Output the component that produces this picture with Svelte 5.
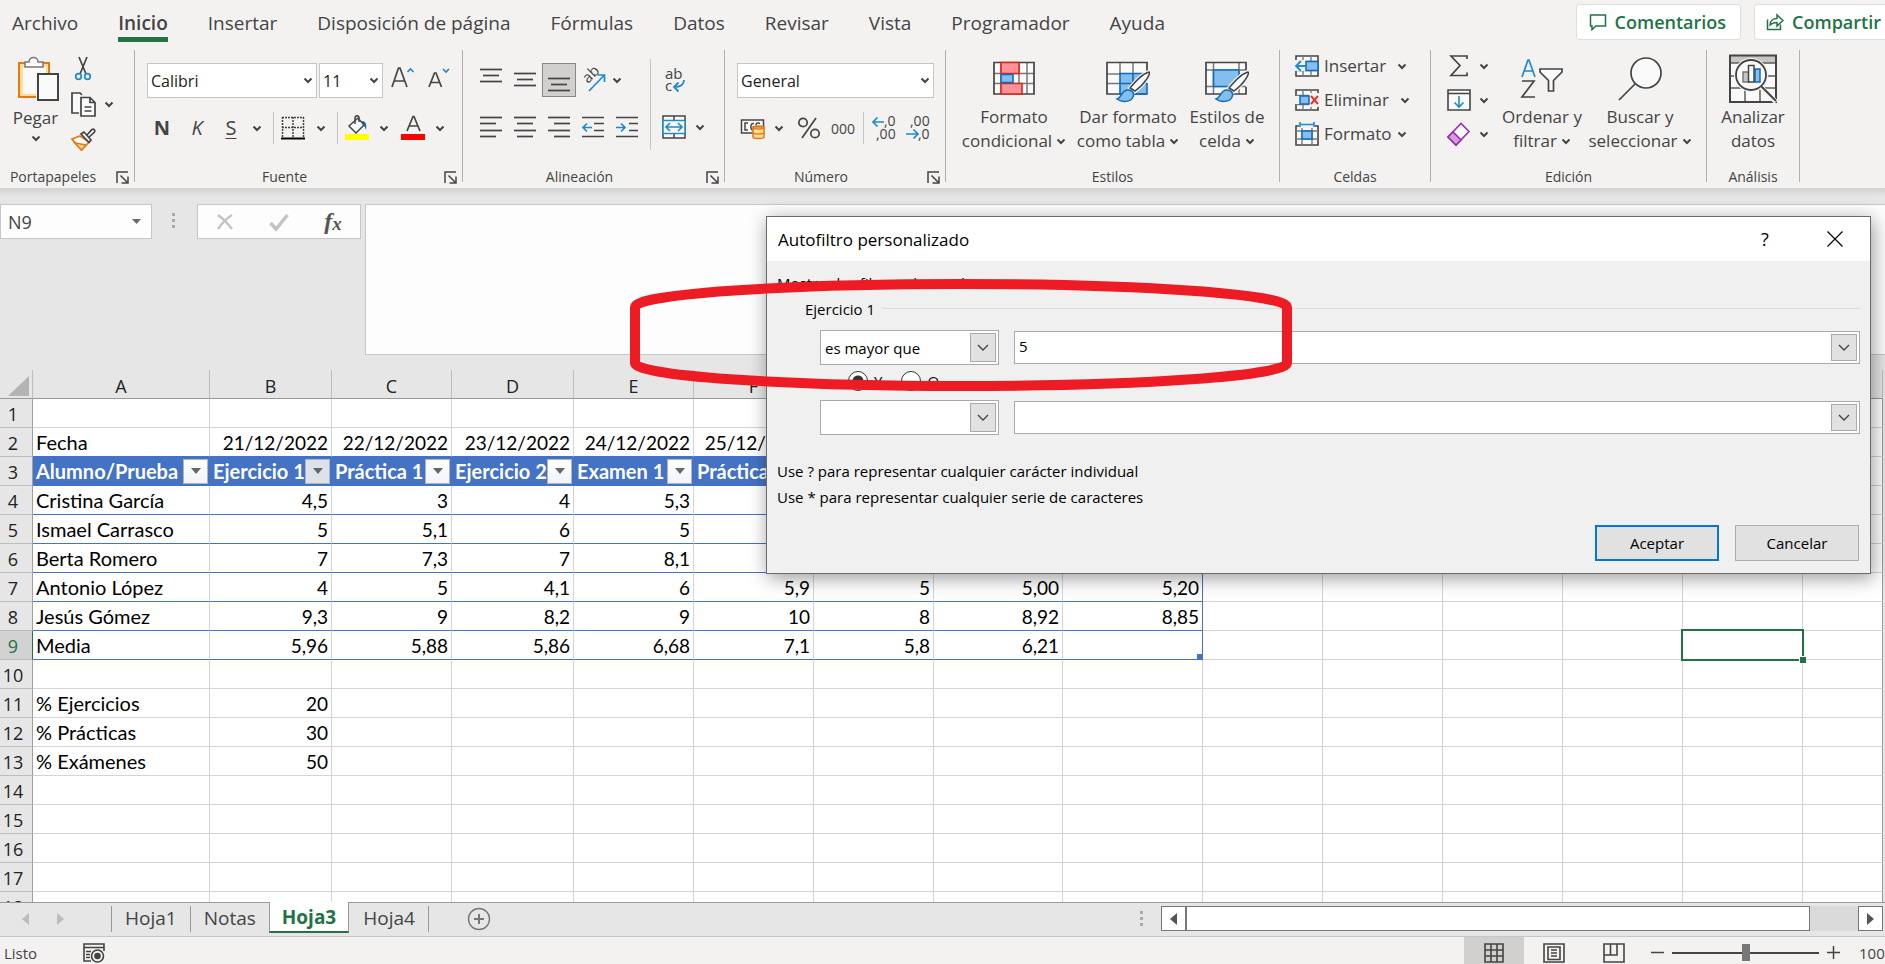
<script>
	const tabs = [
		'Archivo',
		'Inicio',
		'Insertar',
		'Disposición de página',
		'Fórmulas',
		'Datos',
		'Revisar',
		'Vista',
		'Programador',
		'Ayuda'
	];
	let activeTab = 'Inicio';

	const columns = [
		{ name: 'A', width: 177 },
		{ name: 'B', width: 122 },
		{ name: 'C', width: 120 },
		{ name: 'D', width: 122 },
		{ name: 'E', width: 120 },
		{ name: 'F', width: 120 },
		{ name: 'G', width: 120 },
		{ name: 'H', width: 129 },
		{ name: 'I', width: 140 },
		{ name: 'J', width: 120 },
		{ name: 'K', width: 120 },
		{ name: 'L', width: 120 },
		{ name: 'M', width: 120 },
		{ name: 'N', width: 120 },
		{ name: 'O', width: 0 }
	];

	/**@type {Record<number,string[]>}*/
	const cells = {
		2: ['Fecha', '21/12/2022', '22/12/2022', '23/12/2022', '24/12/2022', '25/12/2022'],
		3: ['Alumno/Prueba', 'Ejercicio 1', 'Práctica 1', 'Ejercicio 2', 'Examen 1', 'Práctica 2'],
		4: ['Cristina García', '4,5', '3', '4', '5,3'],
		5: ['Ismael Carrasco', '5', '5,1', '6', '5'],
		6: ['Berta Romero', '7', '7,3', '7', '8,1'],
		7: ['Antonio López', '4', '5', '4,1', '6', '5,9', '5', '5,00', '5,20'],
		8: ['Jesús Gómez', '9,3', '9', '8,2', '9', '10', '8', '8,92', '8,85'],
		9: ['Media', '5,96', '5,88', '5,86', '6,68', '7,1', '5,8', '6,21'],
		11: ['% Ejercicios', '20'],
		12: ['% Prácticas', '30'],
		13: ['% Exámenes', '50']
	};
	const rows = Array.from({ length: 18 }, (_, i) => i + 1);
	const sheets = ['Hoja1', 'Notas', 'Hoja3', 'Hoja4'];
	let activeSheet = 'Hoja3';

	/**@type {(row:number,col:number)=>boolean}*/
	const inTable = (row, col) => row >= 3 && row <= 9 && col <= 8;
</script>

{#snippet chevron()}
	<svg class="chevron" width="10" height="7" viewBox="0 0 10 7"><path d="M1.500 1.500L5 5l3.500-3.500" /></svg>
{/snippet}

{#snippet drop(label)}
	<button class="tool" aria-label={label}>{@render chevron()}</button>
{/snippet}

{#snippet lines(set)}
	<svg width="22" height="22" viewBox="0 0 22 22" class="ink">
		{#each set as [x1, x2, y]}
			<path d="M{x1} {y}.5H{x2}" />
		{/each}
	</svg>
{/snippet}

{#snippet footer(text, launcher)}
	<footer>
		<span>{text}</span>
		{#if launcher}
			<button class="launcher" aria-label="Más opciones de {text}">
				<svg width="13" height="13" viewBox="0 0 13 13">
					<path d="M1 12V1h11M4.500 4.500l6.500 6.500M12 5.500V12H5.500" />
				</svg>
			</button>
		{/if}
	</footer>
{/snippet}

<div class="excel">
	<nav class="tabs">
		{#each tabs as tab}
			<button class="tab" class:active={tab === activeTab} on:click={() => (activeTab = tab)}>{tab}</button>
		{/each}
		<button class="share first">
			<svg width="18" height="17" viewBox="0 0 18 17"><path d="M1.500 1h15v11H7l-4 3.500V12H1.500z" /></svg>
			Comentarios
		</button>
		<button class="share last">
			<svg width="18" height="18" viewBox="0 0 18 18">
				<path d="M1.500 6.500v10h13v-5M4 12c0-4 3-6.500 7-6.500V2l6 5.500-6 5.500V9.500c-3 0-5 .5-7 2.500z" />
			</svg>
			Compartir
		</button>
	</nav>

	<div class="ribbon">
		<section class="group clipboard">
			<div class="body">
				<button class="paste">
					<svg width="46" height="46" viewBox="-4 0 46 46">
						<path d="M2 7h30v34H2z" fill="#fbdd94" stroke="#e07b1a" stroke-width="2" />
						<path d="M6 11h23v27H6z" fill="#fafafa" />
						<path d="M8 11V6h4c0-6 9-6 9 0h5v5z" fill="#fafafa" stroke="#7a7876" stroke-width="1.500" />
						<path d="M19 16h4v28h-4z" fill="#f3f2f1" />
						<path d="M21 18h20v26H21z" fill="#fafafa" stroke="#444" stroke-width="2" />
					</svg>
					<span>Pegar</span>
					{@render chevron()}
				</button>
				<div class="clip-tools">
					<button class="tool" aria-label="Cortar">
						<svg width="18" height="25" viewBox="0 0 18 25" fill="none">
							<path d="M5 1l7 17M13 1L6 18" stroke="#444" stroke-width="1.700" />
							<circle cx="4.500" cy="20.500" r="2.800" stroke="#1e8bcd" stroke-width="1.700" />
							<circle cx="13.500" cy="20.500" r="2.800" stroke="#1e8bcd" stroke-width="1.700" />
						</svg>
					</button>
					<button class="tool" aria-label="Copiar">
						<svg width="25" height="25" viewBox="0 0 25 25" fill="#fafafa" stroke="#444" stroke-width="1.700">
							<path d="M8 21H1V1h8l2 2" />
							<path d="M10 5.500h9l5 5V24H10z" />
							<path d="M19 5.500v5h5M13.500 15h7M13.500 19h7" fill="none" />
						</svg>
					</button>
					{@render drop('Opciones de copia')}
					<button class="tool" aria-label="Copiar formato">
						<svg width="25" height="24" viewBox="0 0 25 24" stroke-width="1.700">
							<path d="M1 11l8-3 9 6-7.500 8z" fill="#fafafa" stroke="#e07b1a" />
							<path d="M4 15l11 2-4.500 5z" fill="#fbdd94" stroke="#e07b1a" />
							<path d="M15 8l6-6.500c2-1 3.500 1 2.500 2.500L17 10" fill="#fafafa" stroke="#444" />
							<path d="M10 6l3-2 7 8-2 2.500z" fill="#fafafa" stroke="#444" />
						</svg>
					</button>
				</div>
			</div>
			{@render footer('Portapapeles', true)}
		</section>

		<section class="group font">
			<div class="body stacked">
				<div class="font-pick">
					<label class="pick">
						<select aria-label="Fuente"><option>Calibri</option></select>
						{@render chevron()}
					</label>
					<label class="pick">
						<select aria-label="Tamaño de fuente"><option>11</option></select>
						{@render chevron()}
					</label>
					<button class="tool" aria-label="Aumentar tamaño de fuente">
						<svg width="24" height="26" viewBox="0 0 24 26" class="ink">
							<path d="M0 19L6.500 0h1.500l7 19M2.500 13h9.500" />
							<path d="M15.500 4L18.500 1l3 3" class="blue" />
						</svg>
					</button>
					<button class="tool" aria-label="Disminuir tamaño de fuente">
						<svg width="24" height="26" viewBox="0 0 24 26" class="ink">
							<path d="M0 19L5.500 5h1.500l5.500 14M2.500 14.500h7.500" />
							<path d="M14 1l3 3 3-3" class="blue" />
						</svg>
					</button>
				</div>
				<div class="font-style">
					<button class="tool letter bold">N</button>
					<button class="tool letter italic">K</button>
					<button class="tool letter under">S</button>
					{@render drop('Opciones de subrayado')}
					<i class="rule"></i>
					<button class="tool" aria-label="Bordes">
						<svg width="24" height="24" viewBox="0 0 24 24" fill="none" stroke="#444" stroke-width="1.500">
							<path d="M1 1.500h22M1 11.500h22M1.500 1v20M12 1v20M22.500 1v20" stroke-dasharray="2 1" />
							<path d="M0 22.500h24" stroke="#000" stroke-width="2" />
						</svg>
					</button>
					{@render drop('Opciones de bordes')}
					<i class="rule"></i>
					<button class="tool" aria-label="Color de relleno">
						<svg width="24" height="26" viewBox="0 0 24 26">
							<path d="M4 11l9-8 6 7-8 8z" fill="#fafafa" stroke="#444" stroke-width="1.500" />
							<path d="M10 9V3c0-3 4-3 4 0v4" fill="none" stroke="#444" stroke-width="1.500" />
							<path d="M17 6c4 0 5 4 4 9-1-4-3-5-3-5z" fill="#1265a8" />
							<path d="M0 19h24v6H0z" fill="#ff0" />
						</svg>
					</button>
					{@render drop('Más colores de relleno')}
					<button class="tool" aria-label="Color de fuente">
						<svg width="24" height="26" viewBox="0 0 24 26">
							<path d="M6 16L12 1.500h1L19 16M8.500 11h8" fill="none" stroke="#444" stroke-width="1.700" />
							<path d="M0 19h24v6H0z" fill="#f00" />
						</svg>
					</button>
					{@render drop('Más colores de fuente')}
				</div>
			</div>
			{@render footer('Fuente', true)}
		</section>

		<section class="group align">
			<div class="body">
				<div class="align-grid">
					<button class="tool" aria-label="Alinear en la parte superior">{@render lines([[0, 22, 0], [3, 19, 6], [0, 22, 12]])}</button>
					<button class="tool" aria-label="Alinear en el medio">{@render lines([[0, 22, 4], [3, 19, 10], [0, 22, 16]])}</button>
					<button class="tool pressed" aria-label="Alinear en la parte inferior">{@render lines([[0, 22, 9], [3, 19, 15], [0, 22, 21]])}</button>
					<button class="tool" aria-label="Orientación">
						<svg width="26" height="26" viewBox="0 0 26 26">
							<text transform="translate(8 17) rotate(-45)" font-size="15" fill="#444">ab</text>
							<path d="M9 24L24 8.500M17.500 8h7v7" fill="none" stroke="#1e8bcd" stroke-width="1.700" />
						</svg>
					</button>
					<button class="tool start" aria-label="Opciones de orientación">{@render chevron()}</button>
					<button class="tool" aria-label="Alinear a la izquierda">{@render lines([[0, 22, 1], [0, 16, 7], [0, 22, 14], [0, 16, 20]])}</button>
					<button class="tool" aria-label="Centrar">{@render lines([[0, 22, 1], [3, 19, 7], [0, 22, 14], [3, 19, 20]])}</button>
					<button class="tool" aria-label="Alinear a la derecha">{@render lines([[0, 22, 1], [6, 22, 7], [0, 22, 14], [6, 22, 20]])}</button>
					<button class="tool" aria-label="Disminuir sangría">
						<svg width="22" height="22" viewBox="0 0 22 22" class="ink">
							<path d="M0 1.500h22M12 7.500h10M12 14.500h10M0 20.500h22" />
							<path d="M10 11.500H1M5 7.500l-4 4 4 4" class="blue" />
						</svg>
					</button>
					<button class="tool" aria-label="Aumentar sangría">
						<svg width="22" height="22" viewBox="0 0 22 22" class="ink">
							<path d="M0 1.500h22M13 7.500h9M13 14.500h9M0 20.500h22" />
							<path d="M0 11.500h9M5 7.500l4 4-4 4" class="blue" />
						</svg>
					</button>
				</div>
				<i class="rule tall"></i>
				<div class="wrap-grid">
					<button class="tool" aria-label="Ajustar texto">
						<svg width="22" height="26" viewBox="0 0 22 26">
							<text x="2" y="12" font-size="15" fill="#444">ab</text>
							<text x="2" y="24" font-size="15" fill="#444">c</text>
							<path d="M21 13c0 5-3 7-10 7M15.500 15.500L11 20l4.500 4.500" fill="none" stroke="#1e8bcd" stroke-width="1.800" />
						</svg>
					</button>
					<i></i>
					<button class="tool" aria-label="Combinar y centrar">
						<svg width="24" height="24" viewBox="0 0 24 24" fill="#fafafa" stroke="#444" stroke-width="1.500">
							<path d="M1 1h22v22H1zM12 1v22" />
							<path d="M1 5.500h22v13H1z" stroke="#1e8bcd" />
							<path d="M4 12h16M8 8l-4 4 4 4M16 8l4 4-4 4" fill="none" stroke="#1e8bcd" stroke-width="1.700" />
						</svg>
					</button>
					{@render drop('Opciones de combinar')}
				</div>
			</div>
			{@render footer('Alineación', true)}
		</section>

		<section class="group number">
			<div class="body stacked">
				<label class="pick">
					<select aria-label="Formato de número"><option>General</option></select>
					{@render chevron()}
				</label>
				<div class="number-tools">
					<button class="tool" aria-label="Formato de contabilidad">
						<svg width="26" height="22" viewBox="0 0 26 22" fill="none" stroke="#444" stroke-width="1.500">
							<path d="M1.500 3h22v13h-22z" fill="#fafafa" />
							<path d="M8 6H5v7h3M14 6.500c-4-1-4 6.500-1 6.500M20 6.500c-3-1.500-4 0-4 2" />
							<path d="M13 10h11v10c0 2-11 2-11 0z" fill="#fbdd94" stroke="#e07b1a" />
							<path d="M13 10.500c0 2 11 2 11 0s-11-2-11 0M13 15.500c0 2 11 2 11 0" stroke="#e07b1a" />
						</svg>
					</button>
					{@render drop('Formatos de contabilidad')}
					<button class="tool" aria-label="Estilo porcentual">
						<svg width="24" height="24" viewBox="0 0 24 24" class="ink">
							<circle cx="6" cy="6.500" r="4.200" /><circle cx="18" cy="17.500" r="4.200" /><path d="M19 2L5 22" />
						</svg>
					</button>
					<button class="tool thousands">000</button>
					<i class="rule"></i>
					<button class="tool" aria-label="Aumentar decimales">
						<svg width="24" height="26" viewBox="0 0 24 26">
							<text x="12" y="11" font-size="14" fill="#444">,0</text>
							<text x="4" y="24" font-size="14" fill="#444">,00</text>
							<path d="M12 7H1M5.500 2.500L1 7l4.500 4.500" fill="none" stroke="#1e8bcd" stroke-width="1.700" />
						</svg>
					</button>
					<button class="tool" aria-label="Disminuir decimales">
						<svg width="24" height="26" viewBox="0 0 24 26">
							<text x="4" y="11" font-size="14" fill="#444">,00</text>
							<text x="12" y="24" font-size="14" fill="#444">,0</text>
							<path d="M0 19h12M7.500 14.500L12 19l-4.500 4.500" fill="none" stroke="#1e8bcd" stroke-width="1.700" />
						</svg>
					</button>
				</div>
			</div>
			{@render footer('Número', true)}
		</section>

		<section class="group styles">
			<div class="body">
				<button class="big">
					<svg width="44" height="46" viewBox="0 0 44 46">
						<path d="M2 6h40v31H2z" fill="#fafafa" />
						<path d="M9 6v31M35 6v31M27 6v31M2 16.500h40M2 26.500h40" fill="none" stroke="#7a7876" stroke-width="1.500" />
						<path d="M2 5.500h40V37H2z" fill="none" stroke="#444" stroke-width="1.700" />
						<path d="M9 5.500h18v11H9zM9 26.500h21V37H9z" fill="#ff9199" stroke="#d8281c" stroke-width="1.600" />
						<path d="M9 17.500h12v8H9z" fill="#83beec" stroke="#0f6cbd" stroke-width="1.600" />
					</svg>
					<span>Formato</span>
					<span>condicional {@render chevron()}</span>
				</button>
				<button class="big">
					<svg width="46" height="46" viewBox="0 0 46 46">
						<path d="M2 5.500h40V37H2z" fill="#fafafa" />
						<path d="M15 16.500h27V37H15z" fill="#83beec" />
						<path d="M15 5v12H2M28 5v12M2 26.500h13" fill="none" stroke="#7a7876" stroke-width="1.500" />
						<path d="M42 37H2V5.500h40v10" fill="none" stroke="#444" stroke-width="1.700" />
						<path d="M15 37V16.500h27M28 17v20M15 26.500h27M42 26v11H15" fill="none" stroke="#0f6cbd" stroke-width="1.600" />
						<path d="M25 31c6-7 12-14 19-16 2 1-3 11-15 20z" fill="#fafafa" stroke="#f3f2f1" stroke-width="4" />
						<path d="M25 31c6-7 12-14 19-16 2 1-3 11-14 19z" fill="#fafafa" stroke="#444" stroke-width="1.500" />
						<path d="M12 42c5-1 4-9 11-9 4 0 7 3 5 7-2 5-11 6-16 2z" fill="#83beec" stroke="#0f6cbd" stroke-width="1.500" />
					</svg>
					<span>Dar formato</span>
					<span>como tabla {@render chevron()}</span>
				</button>
				<button class="big narrow">
					<svg width="46" height="46" viewBox="0 0 46 46">
						<path d="M2 5.500h40V37H2z" fill="#fafafa" />
						<path d="M9.500 5v32M35 5v32M2 13h40M2 29.500h40" fill="none" stroke="#7a7876" stroke-width="1.500" />
						<path d="M42 30v7H2V5.500h40v8" fill="none" stroke="#444" stroke-width="1.700" />
						<path d="M9.500 13H35v16.500H9.500z" fill="#83beec" stroke="#0f6cbd" stroke-width="1.600" />
						<path d="M25 31c6-7 12-14 19-16 2 1-3 11-15 20z" fill="#fafafa" stroke="#f3f2f1" stroke-width="4" />
						<path d="M25 31c6-7 12-14 19-16 2 1-3 11-14 19z" fill="#fafafa" stroke="#444" stroke-width="1.500" />
						<path d="M12 42c5-1 4-9 11-9 4 0 7 3 5 7-2 5-11 6-16 2z" fill="#83beec" stroke="#0f6cbd" stroke-width="1.500" />
					</svg>
					<span>Estilos de</span>
					<span>celda {@render chevron()}</span>
				</button>
			</div>
			{@render footer('Estilos', false)}
		</section>

		<section class="group cells">
			<div class="body">
				<button class="row">
					<svg width="24" height="24" viewBox="0 0 24 24">
						<path d="M1 2h22v20H1z" fill="#fafafa" stroke="#444" stroke-width="1.600" />
						<path d="M8 2v20M16 2v20M1 7.500h22M1 16.500h22" stroke="#7a7876" stroke-width="1.400" />
						<path d="M0 6h11v11H0z" fill="#f3f2f1" />
						<path d="M11 7.500h12v9H11z" fill="#83beec" stroke="#0f6cbd" stroke-width="1.500" />
						<path d="M11 12H1M6 7l-5 5 5 5" fill="none" stroke="#1e8bcd" stroke-width="1.800" />
					</svg>
					<span>Insertar</span>{@render chevron()}
				</button>
				<button class="row">
					<svg width="24" height="24" viewBox="0 0 24 24">
						<path d="M1 2h22v20H1z" fill="#fafafa" stroke="#444" stroke-width="1.600" />
						<path d="M8 2v20M16 2v20M1 7.500h22M1 16.500h22" stroke="#7a7876" stroke-width="1.400" />
						<path d="M0 8h5v8H0zM14 5h10v14H14z" fill="#f3f2f1" />
						<path d="M5 8h9v8H5z" fill="#83beec" stroke="#0f6cbd" stroke-width="1.500" />
						<path d="M16 8l7 8M23 8l-7 8" stroke="#e5322d" stroke-width="1.900" />
					</svg>
					<span class="mid">Eliminar</span>{@render chevron()}
				</button>
				<button class="row">
					<svg width="24" height="26" viewBox="0 0 24 26">
						<path d="M1 5h22v19H1z" fill="#fafafa" stroke="#444" stroke-width="1.600" />
						<path d="M7 5v19M17 5v19M1 10h22M1 18h22" stroke="#7a7876" stroke-width="1.400" />
						<path d="M4 0h16v7H4z" fill="#f3f2f1" />
						<path d="M7 10h10v8H7z" fill="#83beec" stroke="#0f6cbd" stroke-width="1.500" />
						<path d="M5 3.500h14M5 1v5M19 1v5" stroke="#1e8bcd" stroke-width="1.600" />
					</svg>
					<span>Formato</span>{@render chevron()}
				</button>
			</div>
			{@render footer('Celdas', false)}
		</section>

		<section class="group editing">
			<div class="body">
				<div class="edit-grid">
					<button class="tool" aria-label="Autosuma">
						<svg width="20" height="24" viewBox="0 0 20 24" class="ink">
							<path d="M18 5V2H2l9 9.500L2 21.500h16v-3" />
						</svg>
					</button>
					{@render drop('Más funciones')}
					<button class="tool" aria-label="Rellenar">
						<svg width="24" height="22" viewBox="0 0 24 22" stroke-width="1.600">
							<path d="M1 1h22v20H1zM1 4.500h22" fill="#fafafa" stroke="#444" />
							<path d="M12 7v11M7.500 13.500L12 18l4.500-4.500" fill="none" stroke="#1e8bcd" />
						</svg>
					</button>
					{@render drop('Opciones de relleno')}
					<button class="tool" aria-label="Borrar">
						<svg width="24" height="24" viewBox="0 0 24 24" stroke="#9b2fae" stroke-width="1.600">
							<path d="M1 15L14 1.500l8 8L9 23z" fill="#fafafa" />
							<path d="M1 15l5-5 8 8-5 5z" fill="#d59bdc" />
						</svg>
					</button>
					{@render drop('Opciones de borrado')}
				</div>
				<button class="big sort">
					<svg width="44" height="46" viewBox="0 0 44 46" fill="none" stroke="#444" stroke-width="1.700">
						<path d="M2 20L8 3h1l6 17M4 14h9" stroke="#1e8bcd" />
						<path d="M2 24h12L2 40h13" />
						<path d="M20 12h22v3l-8.500 8.500V34h-5V23.500L20 15z" fill="#fafafa" />
					</svg>
					<span>Ordenar y</span>
					<span>filtrar {@render chevron()}</span>
				</button>
				<button class="big find">
					<svg width="44" height="46" viewBox="0 0 44 46" stroke="#444" stroke-width="1.700">
						<circle cx="28" cy="16" r="15" fill="#fafafa" />
						<path d="M17 27L1 43" />
					</svg>
					<span>Buscar y</span>
					<span>seleccionar {@render chevron()}</span>
				</button>
			</div>
			{@render footer('Edición', false)}
		</section>

		<section class="group analysis">
			<div class="body">
				<button class="big">
					<svg width="50" height="50" viewBox="0 0 50 50">
						<path d="M2 2h46v46H2z" fill="#fafafa" />
						<path d="M2 2h46v7H2z" fill="#c8c6c4" />
						<path d="M2 9h46M2 22h46M2 34h46M17 34v14M32 34v14" fill="none" stroke="#5f5d5b" stroke-width="1.500" />
						<path d="M2 1.500h46V48H2z" fill="none" stroke="#444" stroke-width="2" />
						<circle cx="23" cy="21" r="17" fill="#f3f2f1" />
						<circle cx="23" cy="21" r="15" fill="#fafafa" stroke="#444" stroke-width="1.800" />
						<path d="M15 18h6v10h-6z" fill="#c8c6c4" stroke="#7a7876" stroke-width="1.500" />
						<path d="M27 15h5v13h-5z" fill="#83beec" stroke="#0f6cbd" stroke-width="1.500" />
						<path d="M20.500 11.500h5.500V28h-5.500z" fill="#fafafa" stroke="#444" stroke-width="1.500" />
						<path d="M33 33l15 15" stroke="#f3f2f1" stroke-width="5" />
						<path d="M33 32l15 15" stroke="#444" stroke-width="2" />
					</svg>
					<span>Analizar</span>
					<span>datos</span>
				</button>
			</div>
			{@render footer('Análisis', false)}
		</section>
	</div>

	<div class="formula-bar">
		<label class="name-box">
			<input aria-label="Cuadro de nombres" value="N9" />
			<svg width="9" height="5" viewBox="0 0 9 5"><path d="M0 0h9L4.500 5z" fill="#6b6b6b" /></svg>
		</label>
		<i class="dots"></i>
		<div class="fx">
			<button class="tool" aria-label="Cancelar entrada">
				<svg width="18" height="18" viewBox="0 0 18 18"><path d="M2 2q7 5 14 14M16 2Q8 7 2 16" fill="none" stroke="#c4c4c4" stroke-width="2.500" /></svg>
			</button>
			<button class="tool" aria-label="Introducir">
				<svg width="20" height="18" viewBox="0 0 20 18"><path d="M1.500 10l5.500 6L18.500 2" fill="none" stroke="#c4c4c4" stroke-width="3.500" /></svg>
			</button>
			<button class="tool fn">f<small>x</small></button>
		</div>
		<textarea aria-label="Barra de fórmulas"></textarea>
	</div>

	<div class="sheet">
		<table>
			<colgroup>
				<col style="width: 33px" />
				{#each columns as column}
					<col style={column.width ? `width: ${column.width}px` : undefined} />
				{/each}
			</colgroup>
			<thead>
				<tr>
					<th class="corner"><svg width="22" height="21" viewBox="0 0 22 21"><path d="M21 0v20H0z" fill="#b4b4b4" /></svg></th>
					{#each columns as column}
						<th class:current={column.name === 'N'}>{column.name}</th>
					{/each}
				</tr>
			</thead>
			<tbody>
				{#each rows as row}
					<tr class:titles={row === 3}>
						<th class:current={row === 9}>{row}</th>
						{#each columns as column, i}
							<td
								class:text={i === 0}
								class:listed={inTable(row, i)}
								class:edge={inTable(row, i) && i === 8}
								class:above={row === 2 && i <= 8}
								class:end={row === 9 && i === 8}
								class:selected={row === 9 && column.name === 'N'}
							>
								{#if row === 3 && cells[3][i]}
									<div class="title">
										<span>{cells[3][i]}</span>
										<button class="filter" class:hot={i === 1} aria-label="Filtrar {cells[3][i]}">
											<svg width="10" height="6" viewBox="0 0 10 6"><path d="M0 0h10L5 6z" fill="#666" /></svg>
										</button>
									</div>
								{:else}
									{cells[row]?.[i] ?? ''}
								{/if}
							</td>
						{/each}
					</tr>
				{/each}
			</tbody>
		</table>
	</div>

	<div class="sheet-bar">
		<button class="step" aria-label="Hoja anterior"><svg width="7" height="12" viewBox="0 0 7 12"><path d="M7 0v12L0 6z" /></svg></button>
		<button class="step" aria-label="Hoja siguiente"><svg width="7" height="12" viewBox="0 0 7 12"><path d="M0 0v12l7-6z" /></svg></button>
		<div class="sheet-tabs">
			{#each sheets as sheet}
				<button class:active={sheet === activeSheet} on:click={() => (activeSheet = sheet)}>{sheet}</button>
			{/each}
		</div>
		<button class="add" aria-label="Nueva hoja">
			<svg width="24" height="24" viewBox="0 0 24 24" fill="none" stroke="#777">
				<circle cx="12" cy="12" r="10.500" stroke-width="1.400" />
				<path d="M12 7v10M7 12h10" stroke-width="2" />
			</svg>
		</button>
		<i class="dots"></i>
		<div class="scroll">
			<button aria-label="Desplazar a la izquierda"><svg width="7" height="12" viewBox="0 0 7 12"><path d="M7 0v12L0 6z" /></svg></button>
			<div class="thumb"></div>
			<button aria-label="Desplazar a la derecha"><svg width="7" height="12" viewBox="0 0 7 12"><path d="M0 0v12l7-6z" /></svg></button>
		</div>
	</div>

	<div class="status">
		<span class="ready">Listo</span>
		<button class="tool macro" aria-label="Grabar macro">
			<svg width="22" height="20" viewBox="0 0 22 20" fill="none" stroke="#444" stroke-width="1.600">
				<path d="M8 18H1V1h20v7M1 4.500h20M3 8.500h5M3 11.500h4M3 14.500h4" />
				<circle cx="14.500" cy="13" r="6" />
				<circle cx="14.500" cy="13" r="2.500" fill="#444" />
			</svg>
		</button>
		<button class="view on" aria-label="Normal">
			<svg width="20" height="20" viewBox="0 0 20 20"><path d="M1 1h18v18H1zM7 1v18M13 1v18M1 7h18M1 13h18" /></svg>
		</button>
		<button class="view" aria-label="Diseño de página">
			<svg width="22" height="20" viewBox="0 0 22 20"><path d="M1 1h20v18H1zM5 4h12v12.500H5zM8 7h6M8 10h6M8 13h6" /></svg>
		</button>
		<button class="view" aria-label="Vista previa de salto de página">
			<svg width="22" height="20" viewBox="0 0 22 20"><path d="M1 1h20v18H1zM1 12h13V1M7.500 1v11" /></svg>
		</button>
		<button class="zoom-step" aria-label="Alejar"><svg width="13" height="13" viewBox="0 0 13 13"><path d="M0 6.500h13" /></svg></button>
		<input type="range" aria-label="Zoom" min="0" max="200" value="100" />
		<button class="zoom-step" aria-label="Acercar"><svg width="13" height="13" viewBox="0 0 13 13"><path d="M0 6.500h13M6.500 0v13" /></svg></button>
		<span class="percent">100</span>
	</div>

	<div class="dialog" role="dialog" aria-labelledby="dialog-title">
		<header>
			<h2 id="dialog-title">Autofiltro personalizado</h2>
			<button class="help" aria-label="Ayuda">?</button>
			<button aria-label="Cerrar">
				<svg width="16" height="16" viewBox="0 0 16 16"><path d="M.5.5l15 15M15.500.5l-15 15" stroke="#000" stroke-width="1.200" /></svg>
			</button>
		</header>
		<p class="intro">Mostrar las filas en las cuales:</p>
		<div class="criteria">
			<div class="legend">Ejercicio 1<i></i></div>
			<div class="condition">
				<label class="combo">
					<select aria-label="Condición 1"><option>es mayor que</option></select>
					<span class="arrow"><svg width="12" height="7" viewBox="0 0 12 7"><path d="M1 1l5 5 5-5" /></svg></span>
				</label>
				<label class="combo value">
					<input aria-label="Valor 1" value="5" />
					<span class="arrow"><svg width="12" height="7" viewBox="0 0 12 7"><path d="M1 1l5 5 5-5" /></svg></span>
				</label>
			</div>
			<div class="joins">
				<label><input type="radio" name="join" checked />Y</label>
				<label><input type="radio" name="join" />O</label>
			</div>
			<div class="condition">
				<label class="combo">
					<select aria-label="Condición 2"><option></option></select>
					<span class="arrow"><svg width="12" height="7" viewBox="0 0 12 7"><path d="M1 1l5 5 5-5" /></svg></span>
				</label>
				<label class="combo value">
					<input aria-label="Valor 2" value="" />
					<span class="arrow"><svg width="12" height="7" viewBox="0 0 12 7"><path d="M1 1l5 5 5-5" /></svg></span>
				</label>
			</div>
		</div>
		<p class="hint">Use ? para representar cualquier carácter individual</p>
		<p class="hint">Use * para representar cualquier serie de caracteres</p>
		<div class="actions">
			<button class="accept">Aceptar</button>
			<button>Cancelar</button>
		</div>
		<svg class="mark" width="664" height="112" viewBox="0 0 664 112">
			<path d="M6 28A326 23 0 0 1 658 28V84A326 23 0 0 1 6 84Z" />
		</svg>
	</div>
</div>

<style>
	:global(body) {
		margin: 0;
		overflow: hidden;
	}
	.excel {
		position: relative;
		display: flex;
		flex-direction: column;
		height: 100vh;
		overflow: hidden;
		background: #e6e6e6;
		color: #444;
		font-family: 'Open Sans', 'Noto Sans', sans-serif;
		font-size: 17px;
	}
	.excel *,
	.excel *::before {
		box-sizing: border-box;
	}
	button {
		padding: 0;
		border: 0;
		background: none;
		color: inherit;
		font: inherit;
		white-space: nowrap;
	}
	svg {
		display: block;
		flex: none;
		overflow: visible;
	}
	input,
	select,
	textarea {
		margin: 0;
		border: 0;
		background: transparent;
		color: inherit;
		font: inherit;
		appearance: none;
		outline: none;
		resize: none;
	}
	.chevron {
		fill: none;
		stroke: #444;
		stroke-width: 2;
	}
	.ink {
		fill: none;
		stroke: #444;
		stroke-width: 1.7;
	}
	.blue {
		stroke: #1e8bcd;
	}

	/* tabs */
	.tabs {
		display: flex;
		align-items: flex-start;
		gap: 40px;
		height: 50px;
		padding-left: 12px;
		background: #f3f2f1;
		font-size: 19px;
	}
	.tab {
		height: 42px;
		padding-top: 9px;
		border-bottom: 5px solid transparent;
		line-height: 28px;
	}
	.tab.active {
		border-color: #217346;
		font-weight: 600;
	}
	.share {
		display: flex;
		align-items: center;
		gap: 8px;
		height: 36px;
		margin-top: 4px;
		padding: 0 14px 0 12px;
		border: 1px solid #e1dfdd;
		border-radius: 3px;
		background: #fff;
		color: #217346;
		font-size: 18px;
		font-weight: 600;
	}
	.share svg {
		fill: none;
		stroke: #217346;
		stroke-width: 1.5;
	}
	.share.first {
		margin-left: auto;
		margin-right: -27px;
	}
	.share.last {
		padding: 0 4px 0 11px;
		border-right: 0;
		border-radius: 3px 0 0 3px;
	}

	/* ribbon */
	.ribbon {
		display: flex;
		height: 138px;
		padding-bottom: 6px;
		background: #f3f2f1;
	}
	.group {
		display: flex;
		flex-direction: column;
		flex: none;
		border-right: 1px solid #b3b0ad;
	}
	.group .body {
		display: flex;
		flex: 1;
	}
	.group .stacked {
		flex-direction: column;
		gap: 13px;
		padding-top: 13px;
	}
	.group footer {
		display: flex;
		height: 18px;
		font-size: 14px;
		line-height: 18px;
		margin-bottom: -4px;
	}
	.group footer span {
		flex: 1;
		text-align: center;
	}
	.launcher {
		width: 28px;
	}
	.launcher svg {
		margin-left: 10px;
		fill: none;
		stroke: #444;
		stroke-width: 1.5;
	}
	.tool {
		display: flex;
		align-items: center;
		justify-content: center;
	}
	.rule {
		width: 1px;
		height: 32px;
		background: #c8c6c4;
	}
	.pick {
		display: grid;
		align-items: center;
		height: 35px;
		border: 1px solid #c8c6c4;
		background: #fff;
		color: #222;
		font-size: 16px;
	}
	.pick select {
		grid-area: 1 / 1;
		width: 100%;
		height: 33px;
		padding: 0 3px;
	}
	.pick .chevron {
		grid-area: 1 / 1;
		justify-self: end;
		margin-right: 3px;
	}

	.clipboard {
		width: 135px;
	}
	.paste {
		display: flex;
		flex-direction: column;
		align-items: center;
		width: 71px;
		padding-top: 6px;
	}
	.paste span {
		height: 33px;
		line-height: 32px;
	}
	.clip-tools {
		display: grid;
		grid-template-columns: 25px 26px;
		grid-template-rows: 36px 36px 36px;
		align-content: start;
		align-items: center;
	}
	.clip-tools button:first-child {
		grid-column: 1 / 3;
		justify-self: start;
		margin-left: 3px;
	}

	.font {
		width: 328px;
	}
	.font-pick {
		display: grid;
		grid-template-columns: 170px 64px 38px 32px;
		column-gap: 2px;
		padding-left: 12px;
	}
	.font-style {
		display: grid;
		grid-template-columns: 36px 34px 34px 18px 14px 26px 30px 2px 38px 16px 42px 12px;
		align-items: center;
		justify-items: center;
		height: 34px;
		padding-left: 9px;
	}
	.letter {
		padding-bottom: 2px;
		font-size: 20px;
	}
	.bold {
		font-weight: 700;
	}
	.italic {
		font-style: italic;
	}
	.under {
		text-decoration: underline;
		text-decoration-thickness: 1px;
		text-underline-offset: 3px;
	}

	.align {
		width: 262px;
	}
	.align .body {
		padding: 13px 0 0 11px;
	}
	.align-grid {
		display: grid;
		grid-template-columns: repeat(5, 34px);
		grid-template-rows: 34px 34px;
		row-gap: 13px;
	}
	.align-grid .start {
		justify-content: flex-start;
		padding-left: 2px;
	}
	.pressed {
		border: 1px solid #8a8886;
		background: #d2d0ce;
	}
	.rule.tall {
		height: 91px;
		margin: -4px 6px 0 6px;
	}
	.wrap-grid {
		display: grid;
		grid-template-columns: 34px 18px;
		grid-template-rows: 34px 34px;
		row-gap: 13px;
	}

	.number {
		width: 221px;
	}
	.number .pick {
		width: 197px;
		margin-left: 12px;
	}
	.number-tools {
		display: grid;
		grid-template-columns: 32px 20px 40px 28px 13px 28px 40px;
		align-items: center;
		justify-items: center;
		height: 34px;
		padding-left: 12px;
	}
	.thousands {
		font-size: 14px;
	}

	.big {
		display: flex;
		flex-direction: column;
		align-items: center;
		width: 114px;
		padding-top: 5px;
		line-height: 24px;
	}
	.big > svg {
		height: 50px;
	}
	.big span {
		display: flex;
		align-items: center;
		gap: 4px;
	}
	.styles {
		width: 334px;
	}
	.styles .body {
		padding-left: 11px;
	}
	.big.narrow {
		width: 84px;
	}

	.cells {
		width: 151px;
	}
	.cells .body {
		flex-direction: column;
		padding-left: 15px;
	}
	.row {
		display: flex;
		align-items: center;
		gap: 5px;
		height: 34px;
		line-height: 30px;
		padding-bottom: 2px;
		text-align: left;
	}
	.row span {
		width: 68px;
	}
	.row .mid {
		width: 71px;
	}

	.editing {
		width: 276px;
	}
	.edit-grid {
		display: grid;
		grid-template-columns: 32px 18px;
		grid-template-rows: 34px 34px 34px;
		padding-left: 12px;
	}
	.edit-grid .tool {
		padding-bottom: 2px;
	}
	.big.sort,
	.big.find {
		width: 98px;
	}
	.analysis {
		width: 93px;
	}
	.analysis .big {
		width: 92px;
		padding-top: 3px;
	}
	.analysis .big svg {
		height: 52px;
	}

	/* formula bar */
	.formula-bar {
		display: flex;
		align-items: flex-start;
		height: 182px;
		padding-top: 16px;
		background: linear-gradient(#d2d2d2, #e6e6e6 9px);
	}
	.name-box {
		display: flex;
		align-items: center;
		width: 152px;
		height: 35px;
		padding: 0 10px 0 7px;
		border: 1px solid #c6c6c6;
		background: #fdfdfd;
		font-size: 18px;
	}
	.name-box input {
		flex: 1;
		width: 80px;
		padding: 0;
	}
	.dots {
		width: 3px;
		height: 15px;
		background: repeating-linear-gradient(#aaa 0 3px, transparent 3px 6px);
	}
	.formula-bar .dots {
		margin: 9px 22px 0 20px;
	}
	.fx {
		display: grid;
		grid-template-columns: 54px 54px 54px;
		width: 164px;
		height: 35px;
		border: 1px solid #c6c6c6;
		background: #fdfdfd;
	}
	.fn {
		color: #555;
		font: italic 700 24px 'Liberation Serif', serif;
	}
	.fn small {
		font-size: 19px;
		margin-top: 4px;
	}
	.formula-bar textarea {
		flex: 1;
		height: 151px;
		margin-left: 4px;
		border: 1px solid #c6c6c6;
		border-right: 0;
		background: #fdfdfd;
	}

	/* grid */
	.sheet {
		flex: 1;
		min-height: 0;
		padding-right: 2px;
		overflow: hidden;
	}
	table {
		width: 100%;
		border-collapse: separate;
		border-spacing: 0;
		table-layout: fixed;
		color: #000;
		font-family: Lato, sans-serif;
		font-size: 19px;
		line-height: 26px;
	}
	tr {
		height: 29px;
	}
	th {
		padding: 2px 0 0;
		border-right: 1px solid #9f9f9f;
		border-bottom: 1px solid #bdbdbd;
		background: #e6e6e6;
		color: #222;
		font: 18px/26px 'Open Sans', sans-serif;
	}
	thead th {
		padding-top: 4px;
		border-bottom-color: #999;
		border-right-color: #bdbdbd;
		line-height: 24px;
	}
	tbody th {
		padding-right: 6px;
	}
	th.current {
		background: #d2d2d2;
		color: #217346;
		border-right-color: #217346;
	}
	.corner svg {
		margin-left: 8px;
	}
	td {
		height: 28px;
		padding: 2px 3px 0;
		border-right: 1px solid #d4d4d4;
		border-bottom: 1px solid #d4d4d4;
		background: #fff;
		text-align: right;
		white-space: nowrap;
	}
	td:last-child {
		border-right-color: #999;
	}
	td.text {
		padding-top: 0;
		font-size: 20px;
		text-align: left;
	}
	td.listed,
	td.above {
		border-bottom-color: #4472c4;
	}
	.titles td.listed {
		padding-top: 0;
		padding-right: 1px;
		border-right-color: #4472c4;
		background: #4472c4;
		color: #fff;
		font-size: 20px;
		font-weight: 700;
	}
	.title {
		display: flex;
		align-items: center;
		justify-content: space-between;
		height: 28px;
	}
	.title span {
		flex: 1;
		width: 0;
		text-align: left;
	}
	.filter {
		display: flex;
		align-items: center;
		justify-content: center;
		width: 25px;
		height: 25px;
		border: 1px solid #b0b4bb;
		background: linear-gradient(#fff, #f0f3f8);
	}
	.filter.hot {
		background: #dce1ea;
	}
	td.edge {
		border-right-color: #4472c4;
	}
	td.end {
		background: linear-gradient(#4472c4, #4472c4) right 0 bottom 0 / 5px 5px no-repeat #fff;
	}
	td.selected {
		position: relative;
	}
	td.selected::before {
		content: '';
		position: absolute;
		inset: -2px -2px -2px -2px;
		border: 2px solid #217346;
	}
	td.selected::after {
		content: '';
		position: absolute;
		right: -4px;
		bottom: -4px;
		width: 6px;
		height: 6px;
		border: solid #fff;
		border-width: 1px 0 0 1px;
		background: #217346;
	}

	/* sheet tabs */
	.sheet-bar {
		display: flex;
		align-items: center;
		flex: none;
		height: 34px;
		padding-bottom: 2px;
		border-top: 1px solid #999;
		font-size: 19px;
	}
	.step {
		width: 35px;
	}
	.step svg {
		margin-left: 22px;
		fill: #bdbdbd;
	}
	.sheet-tabs {
		display: flex;
		align-self: flex-start;
		margin-left: 41px;
	}
	.sheet-tabs button {
		height: 26px;
		margin-top: 3px;
		padding: 0 13px 2px;
		border-left: 1px solid #999;
		line-height: 20px;
	}
	.sheet-tabs button:last-child {
		border-right: 1px solid #999;
	}
	.sheet-tabs .active {
		height: 31px;
		margin: -1px 0 0;
		padding: 0 12px;
		border-right: 1px solid #999;
		border-bottom: 2px solid #217346;
		background: #fff;
		color: #217346;
		font-weight: 700;
	}
	.sheet-tabs .active + button {
		border-left-color: transparent;
	}
	.add {
		margin-left: 38px;
	}
	.sheet-bar .dots {
		margin: 0 18px 0 auto;
	}
	.scroll {
		display: flex;
		width: 722px;
		height: 25px;
		margin: 0 2px 0 0;
		background: #dadada;
	}
	.scroll button {
		display: flex;
		align-items: center;
		justify-content: center;
		width: 25px;
		border: 1px solid #777;
		background: #fff;
		fill: #555;
	}
	.scroll button:last-child {
		margin-left: auto;
	}
	.thumb {
		width: 624px;
		border: 1px solid #777;
		background: #fff;
	}

	/* status bar */
	.status {
		display: flex;
		align-items: center;
		flex: none;
		height: 28px;
		border-top: 1px solid #c6c6c6;
		background: #f3f2f1;
		font-size: 15px;
	}
	.ready {
		width: 83px;
		padding: 4px 0 0 4px;
	}
	.macro {
		margin: 4px auto 0 0;
	}
	.view {
		display: flex;
		align-items: center;
		justify-content: center;
		width: 60px;
		height: 27px;
		padding-top: 4px;
		fill: none;
		stroke: #444;
		stroke-width: 1.6;
	}
	.view.on {
		background: #d2d0ce;
	}
	.zoom-step {
		padding-top: 4px;
		stroke: #444;
		stroke-width: 1.5;
	}
	.view + .zoom-step {
		margin-left: 7px;
	}
	.status input {
		width: 147px;
		height: 17px;
		margin: 4px 8px 0;
		background: linear-gradient(#444, #444) center / 100% 2px no-repeat;
	}
	.status input::-webkit-slider-thumb {
		width: 8px;
		height: 17px;
		background: #777;
		appearance: none;
	}
	.percent {
		width: 45px;
		padding: 4px 0 0 19px;
	}

	/* dialog */
	.dialog {
		position: absolute;
		top: 216px;
		left: 766px;
		right: 14px;
		padding-bottom: 12px;
		border: 1px solid #6b6b6b;
		background: #f0f0f0;
		box-shadow: 2px 4px 18px rgba(0, 0, 0, 0.4);
		color: #000;
		font-size: 15px;
	}
	.dialog header {
		display: flex;
		align-items: center;
		height: 44px;
		background: #fff;
	}
	.dialog h2 {
		flex: 1;
		margin: 0;
		padding-left: 11px;
		font-size: 17px;
		font-weight: 400;
	}
	.dialog header button {
		display: flex;
		justify-content: center;
		width: 70px;
	}
	.help {
		font-size: 18px;
	}
	.dialog p {
		margin: 0;
		padding-left: 10px;
	}
	.intro {
		height: 34px;
		line-height: 44px;
	}
	.criteria {
		padding: 0 10px 0 53px;
	}
	.legend {
		display: flex;
		align-items: center;
		gap: 7px;
		height: 35px;
		margin-left: -15px;
		padding-bottom: 8px;
		line-height: 22px;
	}
	.legend i {
		flex: 1;
		height: 1px;
		background: #dcdcdc;
	}
	.condition {
		display: grid;
		grid-template-columns: 179px 1fr;
		gap: 15px;
		align-items: center;
	}
	.combo {
		display: flex;
		height: 35px;
		padding: 2px;
		border: 1px solid #a9aaae;
		background: #fff;
	}
	.combo.value {
		height: 33px;
	}
	.combo select,
	.combo input {
		flex: 1;
		min-width: 0;
		padding: 0 2px;
	}
	.combo input {
		padding-bottom: 4px;
	}
	.arrow {
		display: flex;
		align-items: center;
		justify-content: center;
		width: 26px;
		border: 1px solid #a9aaae;
		background: #e1e1e1;
	}
	.arrow svg {
		fill: none;
		stroke: #444;
		stroke-width: 1.4;
	}
	.joins {
		display: flex;
		gap: 19px;
		height: 35px;
		padding: 0 0 4px 28px;
	}
	.joins label {
		display: flex;
		align-items: center;
		gap: 6px;
	}
	.joins input {
		width: 20px;
		height: 20px;
		border: 1px solid #333;
		border-radius: 50%;
		background: #fff;
	}
	.joins input:checked {
		background: radial-gradient(circle, #333 0 5px, #fff 6px);
	}
	.hint {
		line-height: 26px;
	}
	.criteria + .hint {
		margin-top: 23px;
	}
	.actions {
		display: flex;
		justify-content: flex-end;
		gap: 16px;
		margin-top: 15px;
		padding-right: 11px;
	}
	.actions button {
		width: 124px;
		height: 36px;
		border: 1px solid #adadad;
		background: #e1e1e1;
	}
	.actions .accept {
		border: 2px solid #0078d7;
	}

	/* hand-drawn ring round the first condition */
	.mark {
		position: absolute;
		top: 62px;
		left: -138px;
		fill: none;
		stroke: #ed1c24;
		stroke-width: 10;
		pointer-events: none;
	}
</style>
